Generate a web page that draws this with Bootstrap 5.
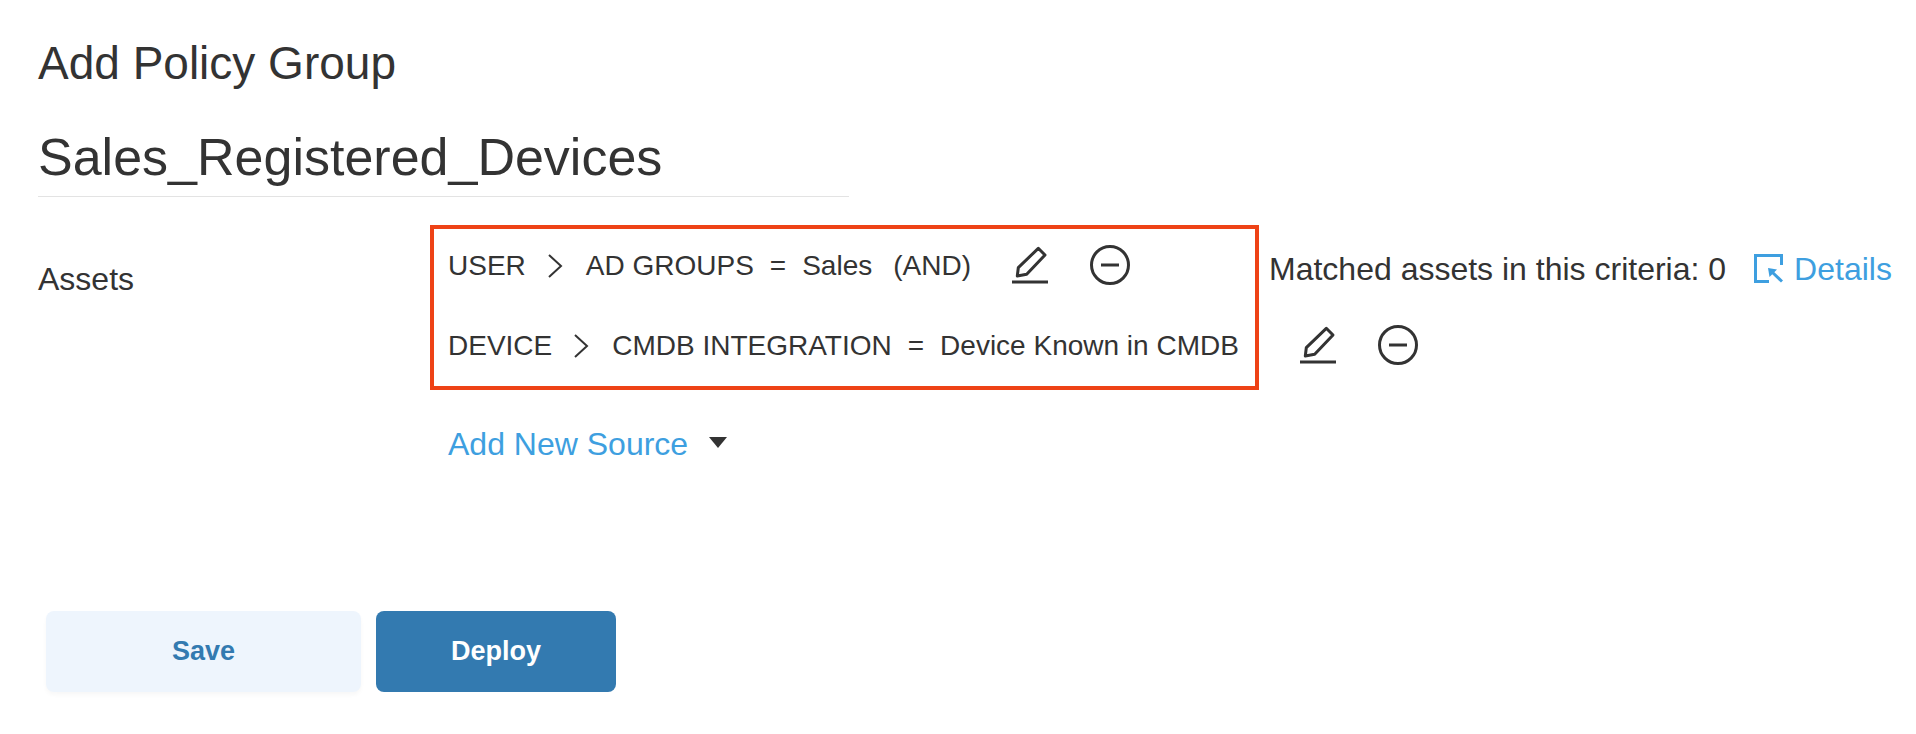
<!DOCTYPE html>
<html lang="en">
<head>
<meta charset="utf-8">
<title>Add Policy Group</title>
<link href="https://cdn.jsdelivr.net/npm/bootstrap@5.3.0/dist/css/bootstrap.min.css" rel="stylesheet">
<style>
body{font-family:"Liberation Sans",Arial,sans-serif;color:#333;background:#fff;font-size:28px}
.page-wrap{padding:36px 0 0 38px;height:734px;overflow:hidden}
.page-title{font-size:46px;line-height:54px;font-weight:400;margin:0}
.group-name{font-size:52px;line-height:64px;width:811px;border-bottom:1px solid #e3e3e3;margin-top:35px;padding-bottom:7px}
.assets-row{margin-top:28px}
.assets-label{width:392px;font-size:32px;line-height:40px;padding-top:34px}
.rule-area{position:relative}
.rule-line{height:80px;padding-left:18px;padding-top:2px;font-size:28px;white-space:nowrap}
.sep{margin:0 23px 0 21px}
.eq{margin:0 16px}
.and-part{margin-left:21px}
.highlight{position:absolute;left:0;top:0;width:829px;height:165px;border:4px solid #ee4216;pointer-events:none}
.act-icon{display:block;flex:none;margin-bottom:2px}
.pen-one{margin-left:41px}
.pen-two{margin-left:61px}
.min-icon{margin-left:42px}
.matched{font-size:32px;white-space:nowrap;margin-top:6px}
.match-one{margin-left:139px}
.det-link{margin-left:28px}
.det-svg{margin-right:10px}
.link-blue{color:#3e9fe0;text-decoration:none}
.add-src{font-size:32px;padding-left:18px;margin-top:39px;line-height:40px}
.caret-tri{width:0;height:0;border-left:9px solid transparent;border-right:9px solid transparent;border-top:11px solid #333;margin-left:21px;margin-bottom:3px}
.action-row{margin-top:147px;padding-left:8px;gap:15px}
.btn-save,.btn-deploy{height:81px;font-size:27px;font-weight:700;border:0;border-radius:8px}
.btn-save{width:315px;background:#eef5fd;color:#337ab0;box-shadow:0 3px 4px rgba(0,0,0,.03)}
.btn-deploy{width:240px;background:#337ab0;color:#fff}
</style>
</head>
<body>
<div class="page-wrap">
  <h1 class="page-title">Add Policy Group</h1>
  <div class="group-name">Sales_Registered_Devices</div>
  <div class="d-flex assets-row">
    <div class="assets-label">Assets</div>
    <div class="rule-area">
      <div class="highlight"></div>
      <div class="rule-line d-flex align-items-center">
        <span>USER</span>
        <svg class="sep" width="16" height="26" viewBox="0 0 16 26"><path d="M2 2l12 11L2 24" fill="none" stroke="#333" stroke-width="2"/></svg>
        <span>AD GROUPS</span><span class="eq">=</span><span>Sales</span><span class="and-part">(AND)</span>
        <svg class="act-icon pen-one" width="36" height="38" viewBox="0 0 36 38"><path d="M6.3 21.7L26.3 2.3 33 9 14.7 28.3 5.3 30z" fill="none" stroke="#333" stroke-width="3" stroke-linejoin="round"/><path d="M0 36h36" stroke="#333" stroke-width="3"/></svg>
        <svg class="act-icon min-icon" width="40" height="40" viewBox="0 0 40 40"><circle cx="20" cy="20" r="18.5" fill="none" stroke="#333" stroke-width="3"/><path d="M11 20h18" stroke="#333" stroke-width="3"/></svg>
        <span class="matched match-one">Matched assets in this criteria: 0</span>
        <a class="link-blue matched d-flex align-items-center det-link" href="#">
          <svg class="det-svg" width="30" height="30" viewBox="0 0 30 30"><path d="M27.5 11V1.5H1.5V27.5H15" fill="none" stroke="#3e9fe0" stroke-width="3"/><path d="M28 27.5L17 17" fill="none" stroke="#3e9fe0" stroke-width="3"/><path d="M14 14l9 1.5-7.5 7.5z" fill="#3e9fe0"/></svg>Details</a>
      </div>
      <div class="rule-line d-flex align-items-center">
        <span>DEVICE</span>
        <svg class="sep" width="16" height="26" viewBox="0 0 16 26"><path d="M2 2l12 11L2 24" fill="none" stroke="#333" stroke-width="2"/></svg>
        <span>CMDB INTEGRATION</span><span class="eq">=</span><span>Device Known in CMDB</span>
        <svg class="act-icon pen-two" width="36" height="38" viewBox="0 0 36 38"><path d="M6.3 21.7L26.3 2.3 33 9 14.7 28.3 5.3 30z" fill="none" stroke="#333" stroke-width="3" stroke-linejoin="round"/><path d="M0 36h36" stroke="#333" stroke-width="3"/></svg>
        <svg class="act-icon min-icon" width="40" height="40" viewBox="0 0 40 40"><circle cx="20" cy="20" r="18.5" fill="none" stroke="#333" stroke-width="3"/><path d="M11 20h18" stroke="#333" stroke-width="3"/></svg>
      </div>
      <div class="add-src d-flex align-items-center"><a class="link-blue" href="#">Add New Source</a><span class="caret-tri"></span></div>
    </div>
  </div>
  <div class="d-flex action-row">
    <button type="button" class="btn btn-save">Save</button>
    <button type="button" class="btn btn-deploy">Deploy</button>
  </div>
</div>
<script src="https://cdn.jsdelivr.net/npm/bootstrap@5.3.0/dist/js/bootstrap.bundle.min.js"></script>
</body>
</html>
